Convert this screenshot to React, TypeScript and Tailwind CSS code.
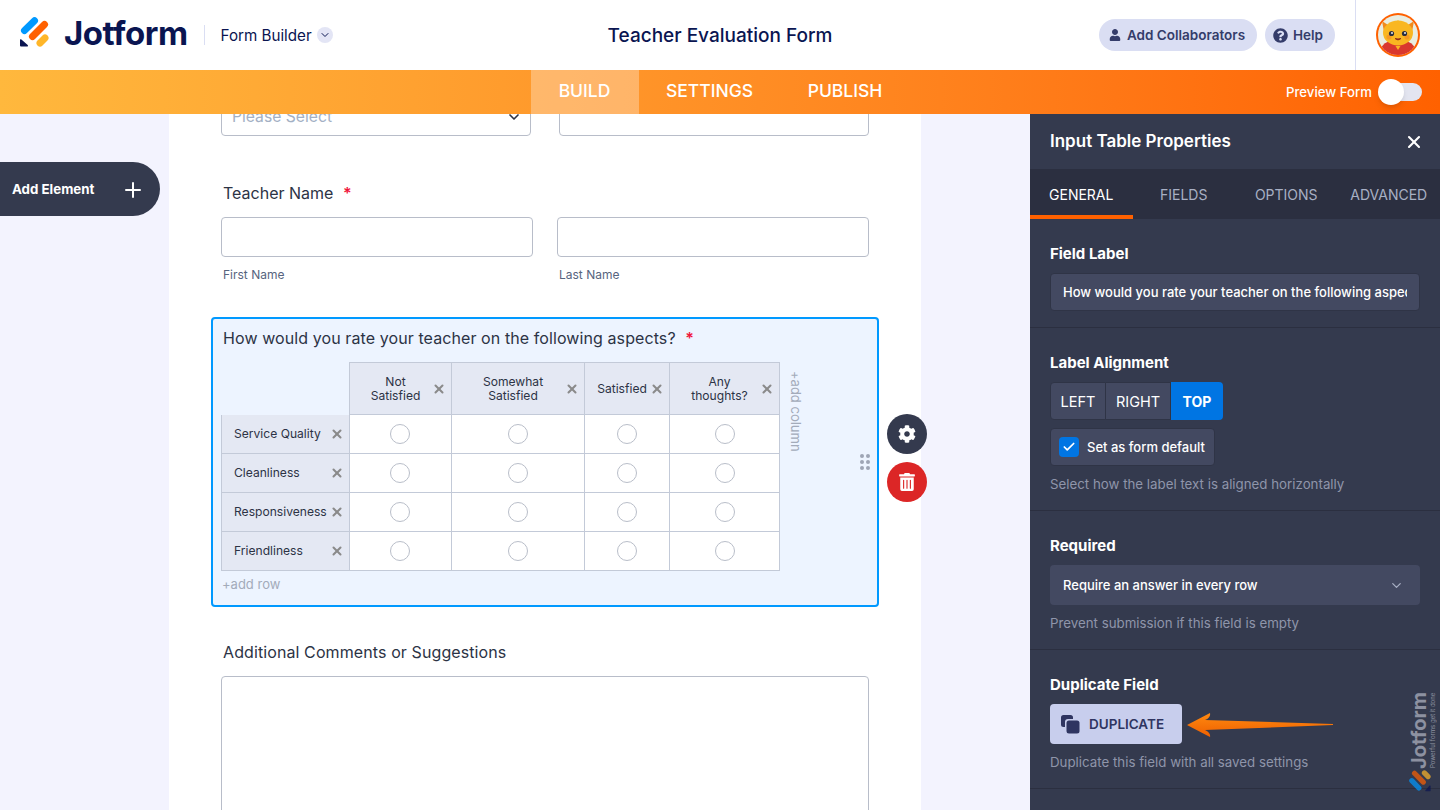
import React from "react";
import { ChevronDown, Check, Plus, X } from "lucide-react";
import { FaCog, FaQuestionCircle, FaTrashAlt, FaUser } from "react-icons/fa";

const columns = [
  { label: "Not", label2: "Satisfied" },
  { label: "Somewhat", label2: "Satisfied" },
  { label: "Satisfied", label2: "" },
  { label: "Any", label2: "thoughts?" },
];
const rows = ["Service Quality", "Cleanliness", "Responsiveness", "Friendliness"];

function Logo({ size = 30 }: { size?: number }) {
  return (
    <svg width={size} height={size} viewBox="0 0 30 30" fill="none">
      <path d="M5.5 13.5 15.5 3.8" stroke="#0099FF" strokeWidth="7" strokeLinecap="round" />
      <path d="M13.5 19.5 25.5 7.5" stroke="#FF6100" strokeWidth="7" strokeLinecap="round" />
      <path d="M21 26 26 21" stroke="#FFB629" strokeWidth="7" strokeLinecap="round" />
      <path d="M1 23v5.5a1 1 0 0 0 1 1h6.2a.8.8 0 0 0 .5-1.4L2.4 22.5A.8.8 0 0 0 1 23Z" fill="#0A1551" />
    </svg>
  );
}

function Avatar() {
  return (
    <svg width="44" height="44" viewBox="0 0 44 44">
      <defs>
        <clipPath id="av"><circle cx="22" cy="22" r="20" /></clipPath>
      </defs>
      <circle cx="22" cy="22" r="22" fill="#FF6100" />
      <circle cx="22" cy="22" r="20" fill="#E9EDE1" />
      <g clipPath="url(#av)">
        <path d="M5 44V36Q7 29 15 28H29Q37 29 39 36V44Z" fill="#D9382E" />
        <path d="M6 8 12 12 8 19ZM38 8 32 12 36 19Z" fill="#F08A1D" />
        <path d="M22 7l2 3-4 0Z" fill="#F9B721" />
        <ellipse cx="22" cy="20" rx="15" ry="12.5" fill="#F9B721" />
        <circle cx="13" cy="24" r="2.6" fill="#F59A23" />
        <circle cx="31" cy="24" r="2.6" fill="#F59A23" />
        <circle cx="15.5" cy="20.5" r="2.6" fill="#2B2F40" />
        <circle cx="28.5" cy="20.5" r="2.6" fill="#2B2F40" />
        <circle cx="16" cy="20" r="0.9" fill="#fff" />
        <circle cx="29" cy="20" r="0.9" fill="#fff" />
        <path d="M19 25.5q3 3 6 0q-3 .8-6 0Z" fill="#8B2C1F" stroke="#8B2C1F" strokeWidth=".8" />
        <path d="M19.5 33h5l-2.5 4Z" fill="#F9B721" />
      </g>
    </svg>
  );
}

function Radio() {
  return <span className="block h-5 w-5 rounded-full border border-[#b9bec9] bg-white" />;
}

function RemoveX({ className }: { className: string }) {
  return <X size={14} strokeWidth={3.5} className={`absolute text-[#8a8a8a] ${className}`} />;
}

function FieldLabel({ children }: { children: React.ReactNode }) {
  return <div className="text-[15px] leading-5 font-bold text-white">{children}</div>;
}

function Helper({ children }: { children: React.ReactNode }) {
  return <div className="mt-2 text-[13.3px] leading-5 text-[#8f95aa]">{children}</div>;
}

function InputTable() {
  return (
    <div className="mt-3 ml-2 grid w-[559px] shrink-0 grid-cols-[129px_102px_133px_85px_110px] grid-rows-[53px_39px_39px_39px_39px]">
      <div />
      {columns.map((c, i) => (
        <div
          key={c.label + i}
          className={`relative flex items-center justify-center border-t border-r border-b border-[#c3cad8] bg-[#e4e8f3] pt-px pr-[10px] text-center text-[12.1px] leading-[14px] text-[#2c3345] ${i === 0 ? "-ml-px border-l" : ""}`}
        >
          <span>
            {c.label}
            {c.label2 && <br />}
            {c.label2}
          </span>
          <RemoveX className="top-[19px] right-[5px]" />
        </div>
      ))}
      {rows.map((r) => (
        <React.Fragment key={r}>
          <div className="relative flex items-center border-r border-b border-l border-[#c3cad8] bg-[#e4e8f3] pt-px pl-3 text-[12.1px] text-[#2c3345]">
            {r}
            <RemoveX className="top-[12px] right-[5px]" />
          </div>
          {columns.map((c, i) => (
            <div
              key={i}
              className={`flex items-center justify-center border-r border-b border-[#c3cad8] bg-white ${i === 0 ? "pr-px" : ""}`}
            >
              <Radio />
            </div>
          ))}
        </React.Fragment>
      ))}
    </div>
  );
}

function FormCard() {
  return (
    <div className="flex h-full w-[752px] shrink-0 flex-col bg-white pl-[52px] text-[#2c3345]">
      <div className="-mt-[18px] flex shrink-0 gap-7">
        <div className="flex h-10 w-[310px] items-center justify-between rounded border border-[#b8bdc9] pt-px pr-2 pl-[10px] text-[15.7px] text-[#a3b0c4]">
          Please Select
          <ChevronDown size={16} strokeWidth={2.5} className="text-[#2c3345]" />
        </div>
        <div className="h-10 w-[310px] rounded border border-[#b8bdc9]" />
      </div>

      <div className="mt-[45px] shrink-0 pl-[2px] text-[16px] leading-6">
        Teacher Name <span className="ml-[5px] font-semibold text-[#f0163c]">*</span>
      </div>
      <div className="mt-3 flex shrink-0 gap-6">
        <div className="w-[312px]">
          <div className="h-10 rounded border border-[#b8bdc9]" />
          <div className="mt-[10px] pl-[2px] text-[12px] leading-4 text-[#57647e]">First Name</div>
        </div>
        <div className="w-[312px]">
          <div className="h-10 rounded border border-[#b8bdc9]" />
          <div className="mt-[10px] pl-[2px] text-[12px] leading-4 text-[#57647e]">Last Name</div>
        </div>
      </div>

      <div className="relative mt-[34px] -ml-[10px] h-[290px] w-[668px] shrink-0 rounded border-2 border-[#0099ff] bg-[#edf4ff] pt-[7px]">
        <div className="pl-[10px] text-[16px] leading-6 tracking-[0.09px]">
          How would you rate your teacher on the following aspects? <span className="ml-[5px] font-semibold text-[#f0163c]">*</span>
        </div>
        <InputTable />
        <div className="mt-[5px] pl-[9px] text-[13px] leading-4 text-[#a3abba]">+add row</div>
        <div className="absolute top-[52px] left-[575px] text-[13px] leading-4 whitespace-nowrap text-[#a3abba] [writing-mode:vertical-rl]">
          +add column
        </div>
        <div className="absolute top-[135px] left-[647px] grid grid-cols-2 gap-x-[2px] gap-y-[2px]">
          {[0, 1, 2, 3, 4, 5].map((d) => (
            <span key={d} className="h-1 w-1 rounded-full bg-[#9ea5b5]" />
          ))}
        </div>
        <div className="absolute top-[95px] left-[674px] flex h-10 w-10 items-center justify-center rounded-full bg-[#343a4e] text-white">
          <FaCog size={18} />
        </div>
        <div className="absolute top-[143px] left-[674px] flex h-10 w-10 items-center justify-center rounded-full bg-[#dc2626] text-white">
          <FaTrashAlt size={18} />
        </div>
      </div>

      <div className="mt-[33px] shrink-0 pl-[2px] text-[16px] leading-6 tracking-[0.1px]">Additional Comments or Suggestions</div>
      <div className="mt-3 h-[300px] w-[648px] shrink-0 rounded border border-[#b8bdc9]" />
    </div>
  );
}

function PropertiesPanel() {
  return (
    <aside className="relative flex h-full w-[410px] shrink-0 flex-col overflow-hidden bg-[#343a4e] text-white">
      <div className="flex h-[55px] shrink-0 items-center justify-between pt-px pr-4 pl-5">
        <span className="text-[17px] font-semibold">Input Table Properties</span>
        <X size={20} strokeWidth={2.5} />
      </div>
      <div className="grid h-[50px] shrink-0 grid-cols-4 bg-[#2b2f40] text-[14px]">
        <div className="flex items-center justify-center border-b-4 border-[#ff6100] pt-1 text-white">GENERAL</div>
        <div className="flex items-center justify-center text-[#a8b0c4]">FIELDS</div>
        <div className="flex items-center justify-center text-[#a8b0c4]">OPTIONS</div>
        <div className="flex items-center justify-center text-[#a8b0c4]">ADVANCED</div>
      </div>

      <section className="shrink-0 border-b border-[#2b2f40] px-5 pt-[25px] pb-4">
        <FieldLabel>Field Label</FieldLabel>
        <input
          readOnly
          value="How would you rate your teacher on the following aspects?"
          className="mt-[9px] h-[38px] w-full rounded border border-[#2f3446] bg-[#434961] px-3 text-[13px] font-medium text-white outline-none"
        />
      </section>

      <section className="shrink-0 border-b border-[#2b2f40] px-5 pt-[25px] pb-4">
        <FieldLabel>Label Alignment</FieldLabel>
        <div className="mt-[9px] flex h-[38px] text-[14.5px]">
          <div className="flex w-[56px] items-center justify-center rounded-l border border-[#2f3446] bg-[#434961] pt-px">LEFT</div>
          <div className="flex w-[65px] items-center justify-center border-y border-r border-[#2f3446] bg-[#434961] pt-px">RIGHT</div>
          <div className="flex w-[52px] items-center justify-center rounded-r bg-[#0075e3] text-[14px] font-bold">TOP</div>
        </div>
        <div className="mt-2 flex h-[38px] w-[165px] items-center gap-2 rounded border border-[#2f3446] bg-[#434961] pl-2 text-[13px] font-medium">
          <span className="flex h-5 w-5 items-center justify-center rounded bg-[#0075e3]">
            <Check size={14} strokeWidth={3} />
          </span>
          <span className="pt-px">Set as form default</span>
        </div>
        <Helper>Select how the label text is aligned horizontally</Helper>
      </section>

      <section className="shrink-0 border-b border-[#2b2f40] px-5 pt-[25px] pb-4">
        <FieldLabel>Required</FieldLabel>
        <div className="mt-[9px] flex h-10 items-center justify-between rounded bg-[#434961] pt-px pr-4 pl-[13px] text-[13px] font-medium">
          Require an answer in every row
          <ChevronDown size={15} className="text-[#a8b0c4]" />
        </div>
        <Helper>Prevent submission if this field is empty</Helper>
      </section>

      <section className="shrink-0 border-b border-[#2b2f40] px-5 pt-[25px] pb-4">
        <FieldLabel>Duplicate Field</FieldLabel>
        <div className="mt-[9px] flex h-10 w-[132px] items-center gap-[9px] rounded bg-[#c8ceed] pl-[11px] text-[13.5px] font-semibold text-[#2f3561]">
          <svg width="19" height="19" viewBox="0 0 19 19" fill="#2f3561">
            <path d="M2.5 0h7A2.5 2.5 0 0 1 12 2.5V4H7a3 3 0 0 0-3 3v5H2.5A2.5 2.5 0 0 1 0 9.5v-7A2.5 2.5 0 0 1 2.5 0Z" />
            <rect x="5.5" y="5.5" width="13" height="13" rx="2.5" />
          </svg>
          DUPLICATE
        </div>
        <Helper>Duplicate this field with all saved settings</Helper>
      </section>

      <svg className="absolute top-[596px] left-[155px]" width="150" height="30" viewBox="0 0 150 30">
        <defs>
          <linearGradient id="arrow" x1="0" y1="0" x2="0" y2="1">
            <stop offset="0" stopColor="#ff8a10" />
            <stop offset="1" stopColor="#ee5f00" />
          </linearGradient>
        </defs>
        <path d="M2 15 25 3 Q26 8 20 10 L148 14 V15 L20 20 Q26 23 25 27Z" fill="url(#arrow)" />
      </svg>

      <div className="absolute top-[578px] right-[4px] flex rotate-180 flex-col items-center opacity-60 [writing-mode:vertical-rl]">
        <span className="text-[20px] leading-5 font-bold whitespace-nowrap text-[#c8ccd8]">Jotform</span>
        <span className="text-[6px] leading-[7px] whitespace-nowrap text-[#c8ccd8]">Powerful forms get it done</span>
      </div>
      <div className="absolute top-[656px] left-[379px] -rotate-90 opacity-70">
        <Logo size={22} />
      </div>
    </aside>
  );
}

export default function App() {
  return (
    <div className="flex h-[810px] w-[1440px] flex-col overflow-hidden bg-[#f3f3fe] font-['Inter',sans-serif]">
      <header className="grid h-[70px] shrink-0 grid-cols-[1fr_auto_1fr] items-center bg-white">
        <div className="flex items-center pl-[19px]">
          <span className="mb-[6px]">
            <Logo />
          </span>
          <span className="mb-1 ml-[15px] text-[33px] leading-none font-bold tracking-[-0.5px] text-[#0a1551]">Jotform</span>
          <span className="ml-4 h-5 w-px bg-[#dadef3]" />
          <span className="mt-[2px] ml-4 text-[15.2px] text-[#0a1551]">Form Builder</span>
          <span className="ml-[5px] flex h-4 w-4 items-center justify-center rounded-full bg-[#e3e5f5] text-[#0a1551]">
            <ChevronDown size={12} />
          </span>
        </div>
        <div className="mt-[2px] text-[19px] font-medium text-[#0a1551]">Teacher Evaluation Form</div>
        <div className="flex h-full items-center justify-end">
          <div className="flex h-8 w-[158px] items-center justify-center gap-[6px] rounded-full bg-[#dadef3] pr-[2px] text-[13.5px] font-semibold text-[#343c6a]">
            <FaUser size={12} />
            Add Collaborators
          </div>
          <div className="ml-2 flex h-8 w-[70px] items-center justify-center gap-[5px] rounded-full bg-[#dadef3] pr-1 text-[13.5px] font-semibold text-[#343c6a]">
            <FaQuestionCircle size={15} />
            Help
          </div>
          <div className="ml-5 flex h-full w-[85px] items-center justify-center border-l border-[#dadef3]">
            <Avatar />
          </div>
        </div>
      </header>

      <nav className="grid h-11 shrink-0 grid-cols-[1fr_auto_1fr] bg-gradient-to-r from-[#ffb83d] to-[#ff6100] text-white">
        <div />
        <div className="flex text-[17.5px] font-medium">
          <div className="flex w-[108px] items-center justify-center bg-white/30 pb-px">BUILD</div>
          <div className="flex w-[142px] items-center justify-center pb-px">SETTINGS</div>
          <div className="flex w-[129px] items-center justify-center pb-px">PUBLISH</div>
        </div>
        <div className="flex items-center justify-end gap-2 pr-[18px]">
          <span className="pt-px text-[13.2px] font-medium">Preview Form</span>
          <span className="relative h-[18px] w-[42px] rounded-full bg-[#e3e5f0]">
            <span className="absolute -top-1 -left-[2px] h-[26px] w-[26px] rounded-full bg-white shadow-md" />
          </span>
        </div>
      </nav>

      <main className="flex min-h-0 flex-1 overflow-hidden">
        <div className="w-[169px] shrink-0 pt-12">
          <div className="flex h-[54px] w-[160px] items-center justify-between rounded-r-full bg-[#343a4e] pt-px pr-[15px] pl-3 text-[13.3px] font-bold text-white">
            Add Element
            <Plus size={24} strokeWidth={2} />
          </div>
        </div>
        <FormCard />
        <div className="flex-1" />
        <PropertiesPanel />
      </main>
    </div>
  );
}
